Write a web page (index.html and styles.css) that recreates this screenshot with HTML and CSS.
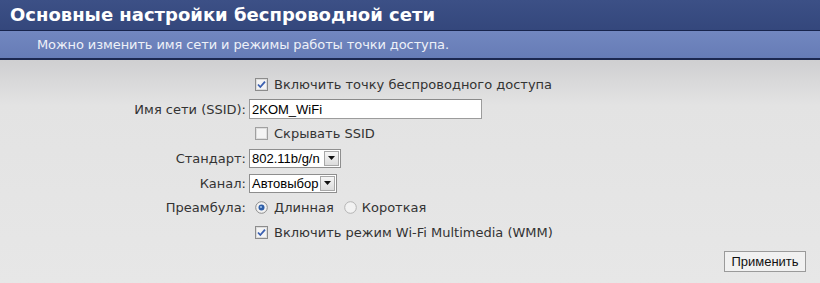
FILE: index.html
```html
<!DOCTYPE html>
<html>
  <head>
    <meta charset="UTF-8" />
    <meta name="viewport" content="width=device-width, initial-scale=1" />

    <link rel="stylesheet" href="styles.css">
  </head>
  <body>
    <h1 class="title">Основные настройки беспроводной сети</h1>
    <p class="subtitle">Можно изменить имя сети и режимы работы точки доступа.</p>

    <div class="content">
      <div class="form">
        <span></span>
        <label class="check">
          <svg class="box" width="13" height="13" viewBox="0 0 13 13">
            <rect x="0.5" y="0.5" width="12" height="12" fill="#f4f4f4" stroke="#8c8c8c" />
            <rect x="1.5" y="1.5" width="10" height="10" fill="none" stroke="#dcdcdc" />
            <path d="M3 6.5 L5.3 9 L10 3.6" fill="none" stroke="#3a5fb0" stroke-width="1.8" />
          </svg>
          Включить точку беспроводного доступа
        </label>

        <span class="label">Имя сети (SSID):</span>
        <div class="value">
          <span class="field">2KOM_WiFi</span>
        </div>

        <span></span>
        <label class="check">
          <svg class="box" width="13" height="13" viewBox="0 0 13 13">
            <rect x="0.5" y="0.5" width="12" height="12" fill="#f4f4f4" stroke="#a0a0a0" />
            <rect x="1.5" y="1.5" width="10" height="10" fill="none" stroke="#dedede" />
          </svg>
          Скрывать SSID
        </label>

        <span class="label">Стандарт:</span>
        <div class="value">
          <span class="select" id="standard">
            <span class="option">802.11b/g/n</span>
            <span class="arrow">
              <svg width="7" height="4" viewBox="0 0 7 4"><path d="M0 0 H7 L3.5 4 Z" fill="#111" /></svg>
            </span>
          </span>
        </div>

        <span class="label">Канал:</span>
        <div class="value">
          <span class="select" id="channel">
            <span class="option">Автовыбор</span>
            <span class="arrow">
              <svg width="7" height="4" viewBox="0 0 7 4"><path d="M0 0 H7 L3.5 4 Z" fill="#111" /></svg>
            </span>
          </span>
        </div>

        <span class="label">Преамбула:</span>
        <div class="value radios">
          <label class="check">
            <svg class="box" width="13" height="13" viewBox="0 0 13 13">
              <circle cx="6.5" cy="6.5" r="5.8" fill="#f2f2f2" stroke="#8c8c8c" />
              <circle cx="6.5" cy="6.5" r="3" fill="#2f5fa8" />
              <circle cx="6" cy="6" r="1.1" fill="#9cc0ea" />
            </svg>
            Длинная
          </label>
          <label class="check">
            <svg class="box" width="13" height="13" viewBox="0 0 13 13">
              <circle cx="6.5" cy="6.5" r="5.8" fill="#f2f2f2" stroke="#b4b4b4" />
            </svg>
            Короткая
          </label>
        </div>

        <span></span>
        <label class="check">
          <svg class="box" width="13" height="13" viewBox="0 0 13 13">
            <rect x="0.5" y="0.5" width="12" height="12" fill="#f4f4f4" stroke="#8c8c8c" />
            <rect x="1.5" y="1.5" width="10" height="10" fill="none" stroke="#dcdcdc" />
            <path d="M3 6.5 L5.3 9 L10 3.6" fill="none" stroke="#3a5fb0" stroke-width="1.8" />
          </svg>
          Включить режим Wi-Fi Multimedia (WMM)
        </label>
      </div>

      <div class="actions">
        <button class="apply">Применить</button>
      </div>
    </div>
  </body>
</html>
```

FILE: styles.css
```css
* {
  box-sizing: border-box;
}

body {
  margin: 0px;
  padding: 0px;
  font-family: "DejaVu Sans", Verdana, sans-serif;
  font-size: 13px;
  color: #333;
  background-color: #e7e7e7;
}

.title {
  margin: 0px;
  height: 31px;
  padding: 4px 0 0 10px;
  font-size: 18px;
  font-weight: bold;
  color: white;
  background-image: linear-gradient(#3c5086 0%, #34477c 100%);
  border-bottom: 1px solid #18244c;
}

.subtitle {
  margin: 0px;
  height: 29px;
  padding: 6px 0 0 37px;
  color: #eef1f8;
  letter-spacing: -0.1px;
  background-image: linear-gradient(#7287c0 0%, #667cb6 100%);
  border-bottom: 2px solid #1c2850;
}

.content {
  background-image: linear-gradient(#cfcfd1 0px, #e3e3e3 45px, #e7e7e7 100%);
  padding: 12px 14px 0 0;
  height: 224px;
}

.form {
  display: grid;
  grid-template-columns: 249px auto;
  grid-auto-rows: 24.7px;
  align-items: center;
}

.label {
  text-align: right;
  padding-right: 3px;
}

.check {
  display: flex;
  align-items: center;
  gap: 6px;
  padding-left: 6px;
}

.box {
  flex: none;
}

.radios {
  display: flex;
  gap: 4px;
}

.radios .check + .check {
  gap: 5px;
}

.field {
  display: block;
  width: 233px;
  height: 20px;
  padding: 2px 0 0 2px;
  font-family: "Liberation Sans", Arial, sans-serif;
  font-size: 13px;
  color: black;
  background-color: white;
  border: 1px solid #9c9c9c;
  border-top-color: #8a8a8a;
}

.select {
  display: flex;
  align-items: stretch;
  height: 19px;
  font-family: "Liberation Sans", Arial, sans-serif;
  font-size: 13px;
  color: black;
  background-color: white;
  border: 1px solid #8e8e8e;
}

#standard {
  width: 92px;
}

#channel {
  width: 88px;
}

.option {
  flex: 1;
  padding: 1px 0 0 2px;
  white-space: nowrap;
  overflow: hidden;
}

.arrow {
  width: 15px;
  margin: 1px;
  display: flex;
  align-items: center;
  justify-content: center;
  background-image: linear-gradient(#f6f6f6, #dcdcdc);
  border: 1px solid #a8a8a8;
}

.actions {
  display: flex;
  justify-content: flex-end;
  margin-top: 6px;
}

.apply {
  width: 82px;
  height: 21px;
  padding: 0px;
  font-family: "Liberation Sans", Arial, sans-serif;
  font-size: 13px;
  color: #111;
  background-color: #f1f1f1;
  border: 1px solid #9a9a9a;
  border-radius: 0px;
}
```
